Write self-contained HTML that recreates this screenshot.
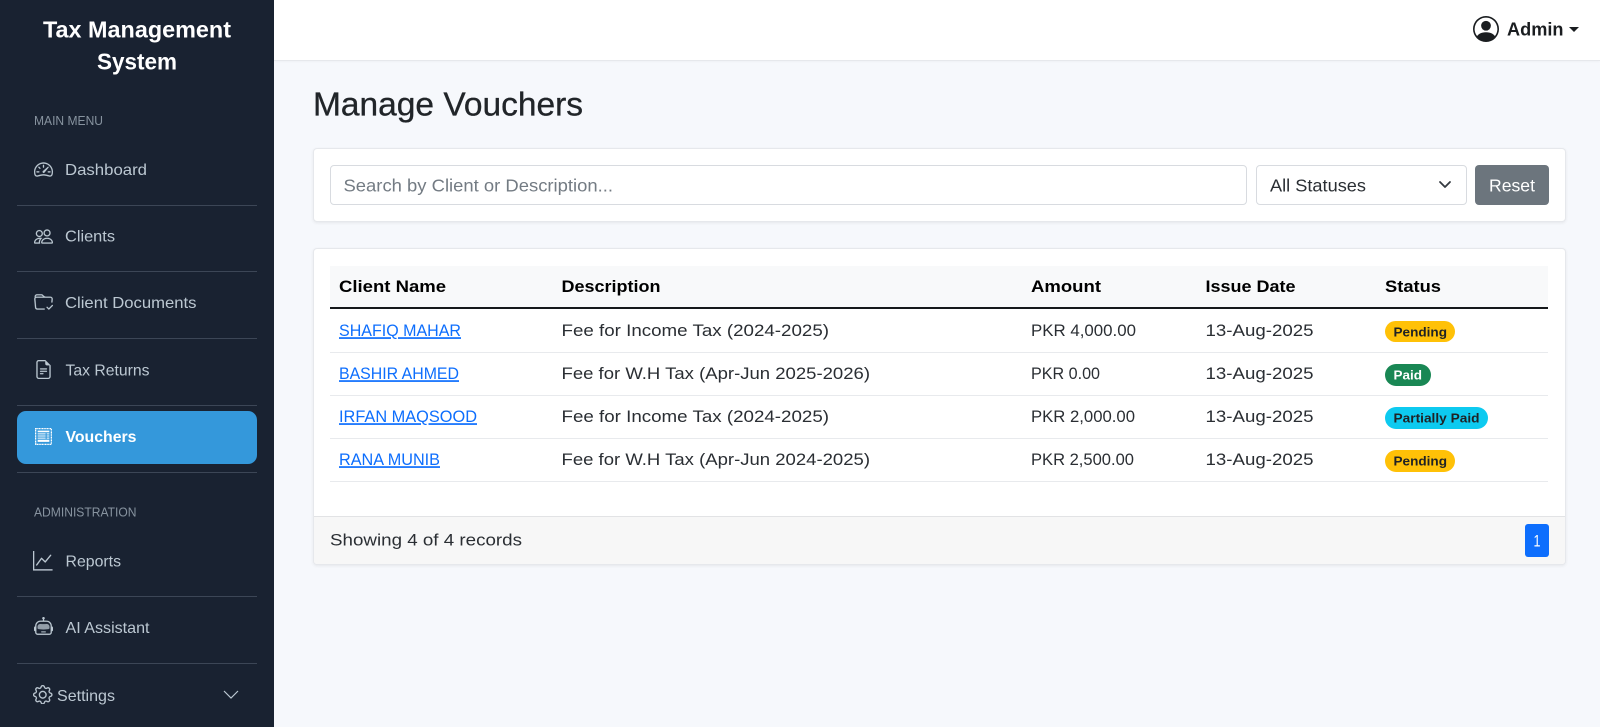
<!DOCTYPE html>
<html lang="en"><head><meta charset="utf-8"><title>Manage Vouchers</title>
<style>
html,body{margin:0;padding:0;width:1600px;height:727px;overflow:hidden;background:#f6f8fc}
.b{position:absolute;box-sizing:border-box}
.ic{position:absolute;fill:#bcc8d2;stroke:#bcc8d2;stroke-width:.12}
.dv{position:absolute;left:17px;width:240px;height:1px;background:#3c4656}
.card{background:#fff;border:1px solid #e6e8ec;border-radius:4px;box-shadow:0 1px 3px rgba(0,0,0,.07)}
.fld{background:#fff;border:1px solid #d8dbe0;border-radius:4px}
.rw{position:absolute;left:330px;width:1218px;height:1px;background:#e8eaed}
svg.t{position:absolute;left:0;top:-.5px}
svg.t text{font-family:"Liberation Sans",Arial,sans-serif;white-space:pre}
.m{font-size:16px;fill:#bcc8d2;transform:translateY(-.7px)}
.s{font-size:13px;fill:#87939f;transform:translateY(-.5px)}
.h{font-size:17px;font-weight:700;fill:#000;transform:translateY(-.8px)}
.d{font-size:17px;fill:#2a2e33;transform:translateY(-.8px)}
.a{font-size:17px;fill:#0d6efd;text-decoration:underline;transform:translateY(-.8px)}
.p{font-size:12.5px;font-weight:700;fill:#1f2225;transform:translateY(-.4px)}
</style></head><body>
<div class="b" style="left:0;top:0;width:274px;height:727px;background:#192231"></div>
<div class="b" style="left:274px;top:0;width:1326px;height:61px;background:#fff;border-bottom:1px solid #e6e8ec;box-shadow:0 1px 2px rgba(0,0,0,.03)"></div>
<div class="dv" style="top:205px"></div><div class="dv" style="top:271px"></div><div class="dv" style="top:338px"></div><div class="dv" style="top:405px"></div><div class="dv" style="top:472px"></div><div class="dv" style="top:596px"></div><div class="dv" style="top:663px"></div>
<div class="b" style="left:17px;top:411px;width:240px;height:53px;background:#3498db;border-radius:9px"></div>

<svg class="ic" style="left:33.5px;top:160px" width="19" height="19" viewBox="0 0 16 16"><path d="M8 4a.5.5 0 0 1 .5.5V6a.5.5 0 0 1-1 0V4.500A.5.5 0 0 1 8 4zM3.732 5.732a.5.5 0 0 1 .707 0l.915.914a.5.5 0 1 1-.708.708l-.914-.915a.5.5 0 0 1 0-.707zM2 10a.5.5 0 0 1 .5-.5h1.586a.5.5 0 0 1 0 1H2.500A.5.5 0 0 1 2 10zm9.500 0a.5.5 0 0 1 .5-.5h1.500a.5.5 0 0 1 0 1H12a.5.5 0 0 1-.5-.5zm.754-4.246a.389.389 0 0 0-.527-.02L7.547 9.310a.91.91 0 1 0 1.302 1.258l3.434-4.297a.389.389 0 0 0-.029-.518z"/><path fill-rule="evenodd" d="M0 10a8 8 0 1 1 15.547 2.661c-.442 1.253-1.845 1.602-2.932 1.250C11.309 13.488 9.475 13 8 13c-1.474 0-3.310.488-4.615.911-1.087.352-2.490.003-2.932-1.250A7.988 7.988 0 0 1 0 10zm8-7a7 7 0 0 0-6.603 9.329c.203.575.923.876 1.680.63C4.397 12.533 6.358 12 8 12s3.604.532 4.923.96c.757.245 1.477-.056 1.680-.631A7 7 0 0 0 8 3z"/></svg>
<svg class="ic" style="left:33.5px;top:227px" width="19" height="19" viewBox="0 0 16 16"><path d="M15 14s1 0 1-1-1-4-5-4-5 3-5 4 1 1 1 1h8zm-7.978-1A.261.261 0 0 1 7 12.996c.001-.264.167-1.030.76-1.720C8.312 10.629 9.282 10 11 10c1.717 0 2.687.63 3.240 1.276.593.69.758 1.457.76 1.720l-.008.002a.274.274 0 0 1-.014.002H7.022zM11 7a2 2 0 1 0 0-4 2 2 0 0 0 0 4zm3-2a3 3 0 1 1-6 0 3 3 0 0 1 6 0zM6.936 9.280a5.880 5.880 0 0 0-1.230-.247A7.350 7.350 0 0 0 5 9c-4 0-5 3-5 4 0 .667.333 1 1 1h4.216A2.238 2.238 0 0 1 5 13c0-1.010.377-2.042 1.090-2.904.243-.294.526-.569.846-.816zM4.920 10A5.493 5.493 0 0 0 4 13H1c0-.26.164-1.030.76-1.724.545-.636 1.492-1.256 3.160-1.275zM1.500 5.500a3 3 0 1 1 6 0 3 3 0 0 1-6 0zm3-2a2 2 0 1 0 0 4 2 2 0 0 0 0-4z"/></svg>
<svg class="ic" style="left:33.5px;top:293px" width="19" height="19" viewBox="0 0 16 16"><path d="m.5 3 .04.87a1.99 1.99 0 0 0-.342 1.311l.637 7A2 2 0 0 0 2.826 14H9v-1H2.826a1 1 0 0 1-.995-.91l-.637-7A1 1 0 0 1 2.190 4h11.620a1 1 0 0 1 .996 1.090L14.540 8h1.005l.256-2.819A2 2 0 0 0 13.810 3H9.828a2 2 0 0 1-1.414-.586l-.828-.828A2 2 0 0 0 6.172 1H2.500a2 2 0 0 0-2 2zm5.672-1a1 1 0 0 1 .707.293L7.586 3H2.190c-.24 0-.47.042-.683.12L1.500 2.980a1 1 0 0 1 1-.98h3.672z"/><path d="M15.854 10.146a.5.5 0 0 1 0 .708l-3 3a.5.5 0 0 1-.708 0l-1.500-1.500a.5.5 0 0 1 .708-.708l1.146 1.147 2.646-2.647a.5.5 0 0 1 .708 0z"/></svg>
<svg class="ic" style="left:33.5px;top:360px" width="19" height="19" viewBox="0 0 16 16"><path d="M5.500 7a.5.5 0 0 0 0 1h5a.5.5 0 0 0 0-1h-5zM5 9.500a.5.5 0 0 1 .5-.5h5a.5.5 0 0 1 0 1h-5a.5.5 0 0 1-.5-.5zm0 2a.5.5 0 0 1 .5-.5h2a.5.5 0 0 1 0 1h-2a.5.5 0 0 1-.5-.5z"/><path d="M9.500 0H4a2 2 0 0 0-2 2v12a2 2 0 0 0 2 2h8a2 2 0 0 0 2-2V4.500L9.500 0zm0 1v2A1.500 1.500 0 0 0 11 4.500h2V14a1 1 0 0 1-1 1H4a1 1 0 0 1-1-1V2a1 1 0 0 1 1-1h5.500z"/></svg>
<svg class="b" style="left:35px;top:427.500px" width="17" height="17" viewBox="0 0 16 16"><rect x=".6" y=".6" width="14.800" height="14.800" fill="none" stroke="#fff" stroke-width="1.200" stroke-dasharray="1.100 .4"/><path fill="#fff" d="M2.500 2.500h11v1.500h-11zM2.500 5h7.500v1h-7.500zM11 5h2.500v1H11zM2.500 7h7.500v1H2.500zM11 7h2.500v1H11zM2.500 9h7.500v1H2.500zM11 9h2.500v1H11zM2.500 11h11v2h-11z"/></svg>
<svg class="ic" style="left:33px;top:551px" width="19.500" height="19.500" viewBox="0 0 16 16"><path fill-rule="evenodd" d="M0 0h1v15h15v1H0V0Zm14.817 3.113a.5.5 0 0 1 .07.704l-4.500 5.500a.5.5 0 0 1-.74.037L7.060 6.767l-3.656 5.027a.5.5 0 0 1-.808-.588l4-5.500a.5.5 0 0 1 .758-.06l2.609 2.610 4.150-5.073a.5.5 0 0 1 .704-.07Z"/></svg>
<svg class="ic" style="left:33.500px;top:617px" width="19" height="19" viewBox="0 0 16 16"><path d="M6 12.500a.5.5 0 0 1 .5-.5h3a.5.5 0 0 1 0 1h-3a.5.5 0 0 1-.5-.5ZM3 8.062C3 6.760 4.235 5.765 5.530 5.886a26.580 26.580 0 0 0 4.940 0C11.765 5.765 13 6.760 13 8.062v1.157a.933.933 0 0 1-.765.935c-.845.147-2.340.346-4.235.346-1.895 0-3.390-.2-4.235-.346A.933.933 0 0 1 3 9.219V8.062Z" opacity=".75"/><path d="M8.500 1.866a1 1 0 1 0-1 0V3h-2A4.500 4.500 0 0 0 1 7.500V8a1 1 0 0 0-1 1v2a1 1 0 0 0 1 1v1a2 2 0 0 0 2 2h10a2 2 0 0 0 2-2v-1a1 1 0 0 0 1-1V9a1 1 0 0 0-1-1v-.5A4.500 4.500 0 0 0 10.500 3h-2V1.866ZM14 7.500V13a1 1 0 0 1-1 1H3a1 1 0 0 1-1-1V7.500A3.500 3.500 0 0 1 5.500 4h5A3.500 3.500 0 0 1 14 7.500Z"/></svg>
<svg class="ic" style="left:33px;top:684.500px" width="19.500" height="19.500" viewBox="0 0 16 16"><path d="M8 4.754a3.246 3.246 0 1 0 0 6.492 3.246 3.246 0 0 0 0-6.492zM5.754 8a2.246 2.246 0 1 1 4.492 0 2.246 2.246 0 0 1-4.492 0z"/><path d="M9.796 1.343c-.527-1.790-3.065-1.790-3.592 0l-.094.319a.873.873 0 0 1-1.255.52l-.292-.16c-1.640-.892-3.433.902-2.540 2.541l.159.292a.873.873 0 0 1-.52 1.255l-.319.094c-1.790.527-1.790 3.065 0 3.592l.319.094a.873.873 0 0 1 .52 1.255l-.16.292c-.892 1.640.901 3.434 2.541 2.540l.292-.159a.873.873 0 0 1 1.255.52l.094.319c.527 1.790 3.065 1.790 3.592 0l.094-.319a.873.873 0 0 1 1.255-.52l.292.16c1.640.893 3.434-.902 2.540-2.541l-.159-.292a.873.873 0 0 1 .52-1.255l.319-.094c1.790-.527 1.790-3.065 0-3.592l-.319-.094a.873.873 0 0 1-.52-1.255l.16-.292c.893-1.640-.902-3.433-2.541-2.540l-.292.159a.873.873 0 0 1-1.255-.52l-.094-.319zm-2.633.283c.246-.835 1.428-.835 1.674 0l.094.319a1.873 1.873 0 0 0 2.693 1.115l.291-.16c.764-.415 1.600.42 1.184 1.185l-.159.292a1.873 1.873 0 0 0 1.116 2.692l.318.094c.835.246.835 1.428 0 1.674l-.319.094a1.873 1.873 0 0 0-1.115 2.693l.16.291c.415.764-.42 1.600-1.185 1.184l-.291-.159a1.873 1.873 0 0 0-2.693 1.116l-.094.318c-.246.835-1.428.835-1.674 0l-.094-.319a1.873 1.873 0 0 0-2.692-1.115l-.292.16c-.764.415-1.600-.42-1.184-1.185l.159-.291A1.873 1.873 0 0 0 1.945 8.930l-.319-.094c-.835-.246-.835-1.428 0-1.674l.319-.094A1.873 1.873 0 0 0 3.060 4.377l-.16-.292c-.415-.764.42-1.600 1.185-1.184l.292.159a1.873 1.873 0 0 0 2.692-1.115l.094-.319z"/></svg>
<svg class="b" style="left:222px;top:686px" width="18" height="16" viewBox="0 0 18 16"><path d="M2 5l7 7 7-7" fill="none" stroke="#bcc8d2" stroke-width="1.200"/></svg>

<svg class="b" style="left:1472.500px;top:16px" width="26" height="26" viewBox="0 0 16 16" fill="#1a1d20"><path d="M11 6a3 3 0 1 1-6 0 3 3 0 0 1 6 0z"/><path fill-rule="evenodd" d="M0 8a8 8 0 1 1 16 0A8 8 0 0 1 0 8zm8-7a7 7 0 0 0-5.468 11.370C3.242 11.226 4.805 10 8 10s4.757 1.225 5.468 2.370A7 7 0 0 0 8 1z"/></svg>
<div class="b" style="left:1569px;top:27px;width:0;height:0;border-left:5px solid transparent;border-right:5px solid transparent;border-top:5px solid #1a1d20"></div>

<div class="b card" style="left:313px;top:148px;width:1253px;height:74px"></div>
<div class="b fld" style="left:330px;top:165px;width:917px;height:40px"></div>
<div class="b fld" style="left:1256px;top:165px;width:211px;height:40px"></div>
<svg class="b" style="left:1436px;top:177px" width="18" height="16" viewBox="0 0 18 16"><path d="M4 5l5 5 5-5" fill="none" stroke="#343a40" stroke-width="1.800" stroke-linecap="round" stroke-linejoin="round"/></svg>
<div class="b" style="left:1475px;top:165px;width:74px;height:40px;background:#6c757d;border-radius:4px"></div>

<div class="b card" style="left:313px;top:248px;width:1253px;height:317px;overflow:hidden"><div class="b" style="left:0;top:267px;width:1253px;height:49px;background:#f7f7f7;border-top:1px solid #e2e3e5"></div></div>
<div class="b" style="left:330px;top:266px;width:1218px;height:42px;background:#f8f9fa"></div>
<div class="b" style="left:330px;top:307px;width:1218px;height:2px;background:#15181b"></div>
<div class="rw" style="top:352px"></div><div class="rw" style="top:395px"></div><div class="rw" style="top:438px"></div><div class="rw" style="top:481px"></div>
<div class="b" style="left:1385px;top:321px;width:70px;height:21px;border-radius:11px;background:#ffc107"></div>
<div class="b" style="left:1385px;top:364px;width:45.500px;height:21.500px;border-radius:11px;background:#198754"></div>
<div class="b" style="left:1385px;top:407px;width:103px;height:21.500px;border-radius:11px;background:#0dcaf0"></div>
<div class="b" style="left:1385px;top:450px;width:70px;height:21.500px;border-radius:11px;background:#ffc107"></div>
<div class="b" style="left:1525px;top:524px;width:24px;height:33px;border-radius:3px;background:#0d6efd"></div>

<svg class="t" width="1600" height="727" viewBox="0 0 1600 727">
<text x="43" y="37.700" font-size="23" font-weight="700" fill="#fff" lengthAdjust="spacingAndGlyphs" textLength="188">Tax Management</text>
<text x="97" y="69.500" font-size="23" font-weight="700" fill="#fff" lengthAdjust="spacingAndGlyphs" textLength="80">System</text>
<text class="s" x="34" y="125.500" lengthAdjust="spacingAndGlyphs" textLength="69">MAIN MENU</text>
<text class="m" x="65" y="175.500" lengthAdjust="spacingAndGlyphs" textLength="82">Dashboard</text>
<text class="m" x="65" y="242" lengthAdjust="spacingAndGlyphs" textLength="50">Clients</text>
<text class="m" x="65" y="308.500" lengthAdjust="spacingAndGlyphs" textLength="131.500">Client Documents</text>
<text class="m" x="65.500" y="376" lengthAdjust="spacingAndGlyphs" textLength="84">Tax Returns</text>
<text class="m" x="65.500" y="442.500" font-weight="700" style="fill:#fff" lengthAdjust="spacingAndGlyphs" textLength="71">Vouchers</text>
<text class="s" x="34" y="517" lengthAdjust="spacingAndGlyphs" textLength="102.500">ADMINISTRATION</text>
<text class="m" x="65.500" y="567" lengthAdjust="spacingAndGlyphs" textLength="55.500">Reports</text>
<text class="m" x="65.500" y="633.500" lengthAdjust="spacingAndGlyphs" textLength="84">AI Assistant</text>
<text class="m" x="57" y="701.500" lengthAdjust="spacingAndGlyphs" textLength="58">Settings</text>

<text x="1507" y="35.500" font-size="18" font-weight="700" fill="#1a1d20" lengthAdjust="spacingAndGlyphs" textLength="56.500">Admin</text>
<text x="313" y="115.500" font-size="33" fill="#212529" stroke="#212529" stroke-width=".3" lengthAdjust="spacingAndGlyphs" textLength="270">Manage Vouchers</text>
<text x="343.500" y="191.500" font-size="17.500" fill="#737b83" lengthAdjust="spacingAndGlyphs" textLength="269.500">Search by Client or Description...</text>
<text x="1270" y="191.500" font-size="17.500" fill="#2a2e33" lengthAdjust="spacingAndGlyphs" textLength="96">All Statuses</text>
<text x="1489" y="191.500" font-size="17.500" fill="#fff" lengthAdjust="spacingAndGlyphs" textLength="46">Reset</text>

<text class="h" x="339" y="293" lengthAdjust="spacingAndGlyphs" textLength="107">Client Name</text>
<text class="h" x="561.500" y="293" lengthAdjust="spacingAndGlyphs" textLength="99">Description</text>
<text class="h" x="1031" y="293" lengthAdjust="spacingAndGlyphs" textLength="70">Amount</text>
<text class="h" x="1205.500" y="293" lengthAdjust="spacingAndGlyphs" textLength="90">Issue Date</text>
<text class="h" x="1385" y="293" lengthAdjust="spacingAndGlyphs" textLength="56">Status</text>

<text class="a" x="339" y="337" lengthAdjust="spacingAndGlyphs" textLength="122">SHAFIQ MAHAR</text>
<text class="d" x="561.500" y="337" lengthAdjust="spacingAndGlyphs" textLength="267.500">Fee for Income Tax (2024-2025)</text>
<text class="d" x="1031" y="337" lengthAdjust="spacingAndGlyphs" textLength="105">PKR 4,000.00</text>
<text class="d" x="1205.500" y="337" lengthAdjust="spacingAndGlyphs" textLength="108">13-Aug-2025</text>
<text class="p" x="1393.500" y="337" lengthAdjust="spacingAndGlyphs" textLength="53.500">Pending</text>

<text class="a" x="339" y="380" lengthAdjust="spacingAndGlyphs" textLength="120">BASHIR AHMED</text>
<text class="d" x="561.500" y="380" lengthAdjust="spacingAndGlyphs" textLength="308.500">Fee for W.H Tax (Apr-Jun 2025-2026)</text>
<text class="d" x="1031" y="380" lengthAdjust="spacingAndGlyphs" textLength="69">PKR 0.00</text>
<text class="d" x="1205.500" y="380" lengthAdjust="spacingAndGlyphs" textLength="108">13-Aug-2025</text>
<text class="p" x="1393.500" y="380" style="fill:#fff" lengthAdjust="spacingAndGlyphs" textLength="28.500">Paid</text>

<text class="a" x="339" y="423" lengthAdjust="spacingAndGlyphs" textLength="138">IRFAN MAQSOOD</text>
<text class="d" x="561.500" y="423" lengthAdjust="spacingAndGlyphs" textLength="267.500">Fee for Income Tax (2024-2025)</text>
<text class="d" x="1031" y="423" lengthAdjust="spacingAndGlyphs" textLength="104">PKR 2,000.00</text>
<text class="d" x="1205.500" y="423" lengthAdjust="spacingAndGlyphs" textLength="108">13-Aug-2025</text>
<text class="p" x="1393.500" y="423" lengthAdjust="spacingAndGlyphs" textLength="86">Partially Paid</text>

<text class="a" x="339" y="466" lengthAdjust="spacingAndGlyphs" textLength="101">RANA MUNIB</text>
<text class="d" x="561.500" y="466" lengthAdjust="spacingAndGlyphs" textLength="308.500">Fee for W.H Tax (Apr-Jun 2024-2025)</text>
<text class="d" x="1031" y="466" lengthAdjust="spacingAndGlyphs" textLength="103">PKR 2,500.00</text>
<text class="d" x="1205.500" y="466" lengthAdjust="spacingAndGlyphs" textLength="108">13-Aug-2025</text>
<text class="p" x="1393.500" y="466" lengthAdjust="spacingAndGlyphs" textLength="53.500">Pending</text>

<text class="d" x="330" y="546.500" lengthAdjust="spacingAndGlyphs" textLength="192">Showing 4 of 4 records</text>
<text x="1533.500" y="546.500" font-size="16.500" fill="#fff" lengthAdjust="spacingAndGlyphs" textLength="7">1</text>
</svg>
</body></html>
